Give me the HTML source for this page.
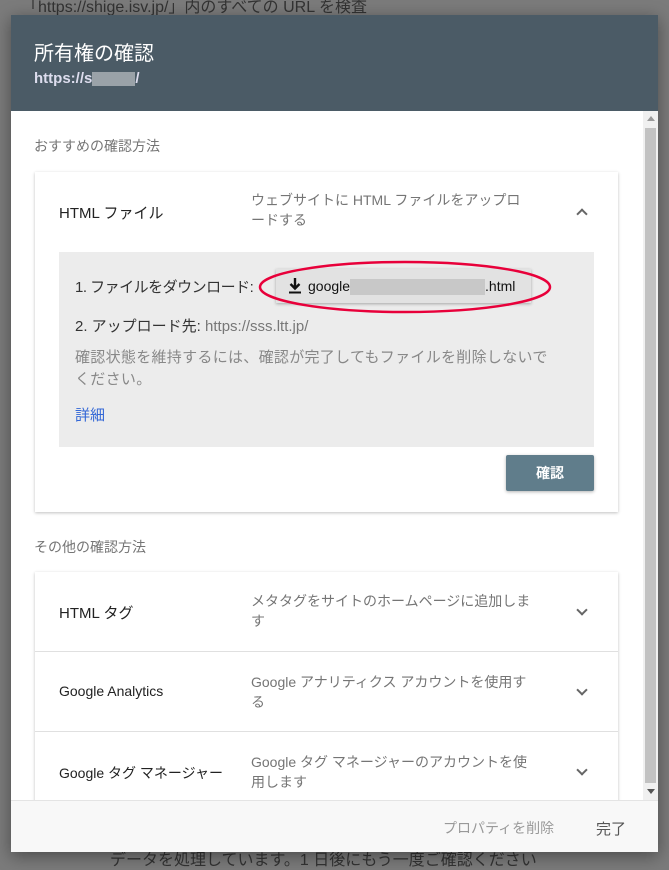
<!DOCTYPE html>
<html><head><meta charset="utf-8"><style>
*{margin:0;padding:0;box-sizing:border-box}
body{width:669px;height:867px;background:#7b7b7b;position:relative;overflow:hidden;font-family:"Liberation Sans","Noto Sans CJK JP",sans-serif}
.a{position:absolute}
.bgt{color:#3a3a3a;font-size:16px}
.dlg{left:11px;top:15px;width:647px;height:837px;background:#fff;box-shadow:0 4px 16px rgba(0,0,0,.4)}
.hd{left:0;top:0;width:647px;height:96px;background:#4b5b66}
.card{background:#fff;box-shadow:0 1px 3px rgba(0,0,0,.25);}
.t{font-size:15px;color:#222}
.g{font-size:14px;color:#757575;line-height:20px}
.chev{width:8px;height:8px;border-right:2px solid #666;border-bottom:2px solid #666;transform:rotate(45deg)}
</style></head><body>
<div class="a bgt" style="left:22px;top:-7px;color:#333">「https://shige.isv.jp/」内のすべての URL を検査</div>
<div class="a bgt" style="left:110px;top:846px;color:#333">データを処理しています。1 日後にもう一度ご確認ください</div>
<div class="a dlg">
 <div class="a hd">
  <div class="a" style="left:23px;top:22px;color:#fff;font-size:20px">所有権の確認</div>
  <div class="a" style="left:23px;top:55px;color:#dde;font-size:15px;font-weight:bold">https://s<span style="display:inline-block;width:43px;height:14px;background:#9aa2a8;vertical-align:middle"></span>/</div>
 </div>
 <div class="a" style="left:632px;top:96px;width:15px;height:689px;background:#f0f0f0">
  <div class="a" style="left:2px;top:17px;width:11px;height:655px;background:#c2c2c2"></div>
  <div class="a" style="left:4px;top:5px;width:0;height:0;border:4px solid transparent;border-bottom:5px solid #999;border-top:0"></div>
  <div class="a" style="left:4px;top:678px;width:0;height:0;border:4px solid transparent;border-top:5px solid #555;border-bottom:0"></div>
 </div>
 <div class="a g" style="left:23px;top:121px;font-size:14px">おすすめの確認方法</div>
 <div class="a card" style="left:24px;top:157px;width:583px;height:340px">
  <div class="a t" style="left:24px;top:30px">HTML ファイル</div>
  <div class="a g" style="left:216px;top:18px;width:320px">ウェブサイトに HTML ファイルをアップロ<br>ードする</div>
  <div class="a chev" style="left:543px;top:38px;transform:rotate(225deg)"></div>
  <div class="a" style="left:24px;top:80px;width:535px;height:195px;background:#ececec">
   <div class="a" style="left:16px;top:24px;font-size:15px;color:#333;letter-spacing:-0.5px">1. ファイルをダウンロード:</div>
   <div class="a" style="left:217px;top:17px;width:255px;height:34px;background:#e2e2e2;box-shadow:0 1px 3px rgba(0,0,0,.3)">
    <svg class="a" style="left:11px;top:8px" width="16" height="18" viewBox="0 0 16 18"><path d="M8 1v10M3.5 7L8 11.5 12.5 7" stroke="#111" stroke-width="2.4" fill="none"/><rect x="2" y="14.5" width="12" height="2" fill="#111"/></svg>
    <div class="a" style="left:32px;top:9px;font-size:14px;color:#111">google<span style="display:inline-block;width:135px;height:16px;background:#c8c8c8;vertical-align:middle"></span>.html</div>
   </div>
   <svg class="a" style="left:196px;top:6px" width="300" height="60"><ellipse cx="150" cy="29" rx="145" ry="25" fill="none" stroke="#e8003a" stroke-width="2.5"/></svg>
   <div class="a" style="left:16px;top:63px;font-size:15px;color:#333">2. アップロード先: <span style="color:#777">https://sss.ltt.jp/</span></div>
   <div class="a g" style="left:16px;top:95px;width:520px;font-size:15px;line-height:22px;color:#888;letter-spacing:0.3px">確認状態を維持するには、確認が完了してもファイルを削除しないで<br>ください。</div>
   <div class="a" style="left:16px;top:152px;font-size:15px;color:#3367d6">詳細</div>
  </div>
  <div class="a" style="left:471px;top:283px;width:88px;height:36px;background:#607d8b;border-radius:2px;box-shadow:0 1px 3px rgba(0,0,0,.3);color:#fff;font-size:14px;font-weight:bold;text-align:center;line-height:36px">確認</div>
 </div>
 <div class="a g" style="left:23px;top:522px">その他の確認方法</div>
 <div class="a card" style="left:24px;top:557px;width:583px;height:240px">
  <div class="a" style="left:0;top:79px;width:583px;height:1px;background:#e0e0e0"></div>
  <div class="a" style="left:0;top:159px;width:583px;height:1px;background:#e0e0e0"></div>
  <div class="a t" style="left:24px;top:30px">HTML タグ</div>
  <div class="a g" style="left:216px;top:19px;width:320px">メタタグをサイトのホームページに追加しま<br>す</div>
  <div class="a chev" style="left:543px;top:34px"></div>
  <div class="a t" style="left:24px;top:111px;font-size:14px">Google Analytics</div>
  <div class="a g" style="left:216px;top:100px;width:320px">Google アナリティクス アカウントを使用す<br>る</div>
  <div class="a chev" style="left:543px;top:114px"></div>
  <div class="a t" style="left:24px;top:191px;font-size:14px">Google タグ マネージャー</div>
  <div class="a g" style="left:216px;top:180px;width:320px">Google タグ マネージャーのアカウントを使<br>用します</div>
  <div class="a chev" style="left:543px;top:194px"></div>
 </div>
 <div class="a" style="left:0;top:785px;width:647px;height:52px;background:#f8f8f8;border-top:1px solid #e4e4e4">
  <div class="a" style="left:432px;top:17px;font-size:14px;color:#999">プロパティを削除</div>
  <div class="a" style="left:585px;top:17px;font-size:15px;color:#555">完了</div>
 </div>
</div>
</body></html>
